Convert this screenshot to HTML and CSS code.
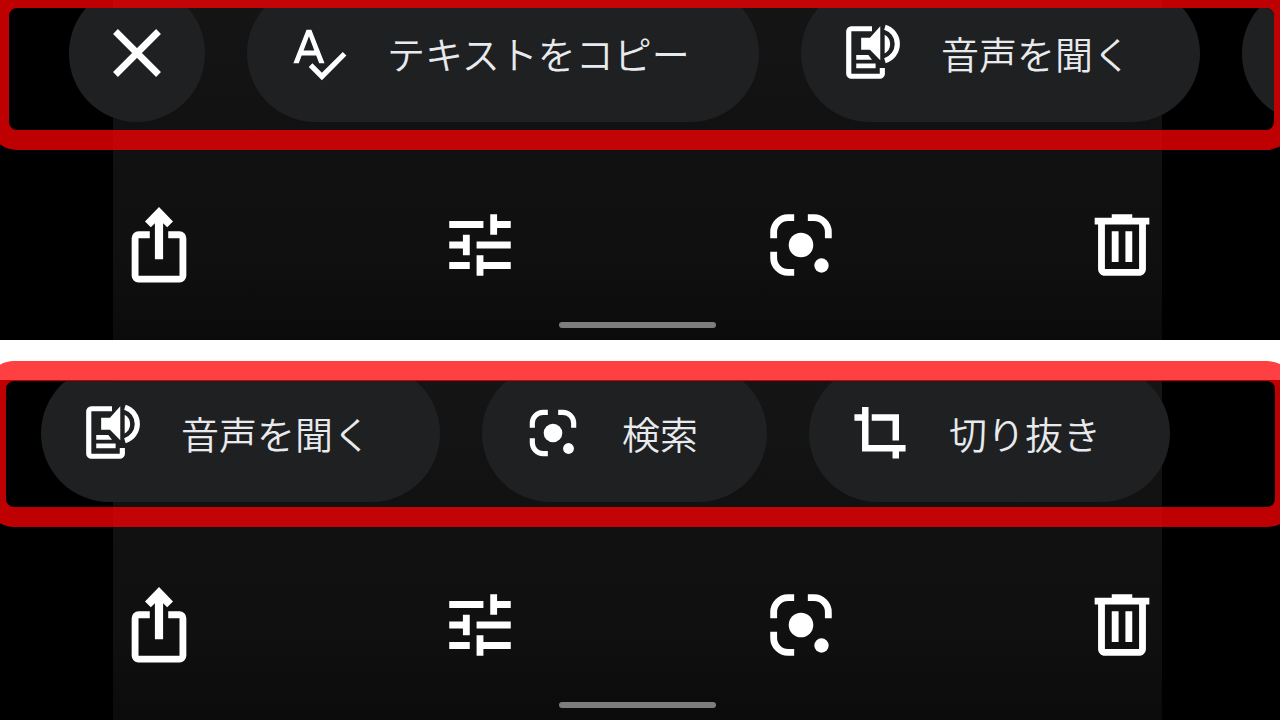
FILE: index.html
```html
<!DOCTYPE html>
<html lang="ja">
<head>
    <meta charset="UTF-8">
    <meta name="viewport" content="width=device-width, initial-scale=1">
    <title>テキストをコピー</title>
    <link rel="stylesheet" href="styles.css">
</head>
<body>
    <!-- Shared icons -->
    <svg class="icon-defs" aria-hidden="true">
        <symbol id="icon-close" viewBox="0 0 24 24">
            <path class="line" d="M5.700 5.700l12.600 12.600M18.300 5.700L5.700 18.300"/>
        </symbol>
        <symbol id="icon-copy-text" viewBox="0 0 24 24">
            <path d="M12.45 16h2.09L9.43 3H7.57L2.46 16h2.09l1.12-3h5.64l1.14 3zm-6.02-5L8.5 5.48 10.57 11H6.43zm15.16.59l-8.09 8.09L9.83 16l-1.41 1.41 5.09 5.09L23 13l-1.41-1.41z"/>
        </symbol>
        <symbol id="icon-listen" viewBox="0 0 24 24">
            <path class="line" d="M12 2.6H4a1 1 0 0 0-1 1V20a1 1 0 0 0 1 1h11a1 1 0 0 0 1-1v-2.2"/>
            <path class="line" d="M17 2a6.8 6.8 0 0 1 0 13"/>
            <path d="M7.8 6.1h3.4l4-4.5v13.2l-4-4.1H7.8z"/>
            <path d="M16.9 4.9a4.2 4.2 0 0 1 0 7.3z"/>
            <path d="M5.9 12.8h4.7l1.4 1.8H5.9zM5.9 16.1h7.5v1.8H5.9z"/>
        </symbol>
        <symbol id="icon-lens" viewBox="0 0 24 24">
            <path class="line" d="M4 10V8.200a4.200 4.200 0 0 1 4.200-4.200H10M14 4h1.800A4.200 4.200 0 0 1 20 8.200V10M4 14v1.800A4.200 4.200 0 0 0 8.200 20H10"/>
            <circle cx="12" cy="12" r="3.600"/>
            <circle cx="18" cy="18" r="2.100"/>
        </symbol>
        <symbol id="icon-crop" viewBox="0 0 24 24">
            <path class="line line-wide" d="M2.100 6h4.200M6.300 1.900v16h15.600M8.800 6h9.300v8.900M18.100 17.900v4"/>
        </symbol>
        <symbol id="icon-share" viewBox="0 0 24 24">
            <path d="M12 .9l4.100 4.200-1.700 1.700-1.200-1.200V16.200h-2.400V5.600L9.600 6.800 7.900 5.100z"/>
            <path class="line" d="M9.300 9H6a1 1 0 0 0-1 1v11a1 1 0 0 0 1 1h12a1 1 0 0 0 1-1V10a1 1 0 0 0-1-1h-3.300"/>
        </symbol>
        <symbol id="icon-tune" viewBox="0 0 24 24">
            <path d="M3 17v2h6v-2H3zM3 5v2h10V5H3zm10 16v-2h8v-2h-8v-2h-2v6h2zM7 9v2H3v2h4v2h2V9H7zm14 4v-2H11v2h10zm-6-4h2V7h4V5h-4V3h-2v6z"/>
        </symbol>
        <symbol id="icon-trash" viewBox="0 0 24 24">
            <path d="M4 4h5V3h6v1h5v2h-1v13c0 1.100-.9 2-2 2H7c-1.100 0-2-.9-2-2V6H4zm3 2v13h10V6zm2 2h2v9H9zm4 0h2v9h-2z"/>
        </symbol>
    </svg>

    <!-- First row of suggestions -->
    <section class="screen">
        <div class="chip-frame chip-frame-start">
            <button class="chip chip-round" type="button" aria-label="閉じる"><svg class="icon-large"><use href="#icon-close"/></svg></button>
            <button class="chip" type="button"><svg class="icon"><use href="#icon-copy-text"/></svg>テキストをコピー</button>
            <button class="chip" type="button"><svg class="icon"><use href="#icon-listen"/></svg>音声を聞く</button>
            <button class="chip chip-round" type="button" aria-label="検索"></button>
        </div>
        <nav class="toolbar">
            <button class="tool" type="button" aria-label="共有"><svg class="icon-large"><use href="#icon-share"/></svg></button>
            <button class="tool" type="button" aria-label="編集"><svg class="icon-large"><use href="#icon-tune"/></svg></button>
            <button class="tool" type="button" aria-label="レンズ"><svg class="icon-large"><use href="#icon-lens"/></svg></button>
            <button class="tool" type="button" aria-label="削除"><svg class="icon-large"><use href="#icon-trash"/></svg></button>
        </nav>
        <div class="home-area"><div class="home-bar"></div></div>
    </section>

    <!-- Row scrolled to the end -->
    <section class="screen">
        <div class="chip-frame chip-frame-end">
            <button class="chip" type="button"><svg class="icon"><use href="#icon-listen"/></svg>音声を聞く</button>
            <button class="chip" type="button"><svg class="icon"><use href="#icon-lens"/></svg>検索</button>
            <button class="chip" type="button"><svg class="icon"><use href="#icon-crop"/></svg>切り抜き</button>
        </div>
        <nav class="toolbar">
            <button class="tool" type="button" aria-label="共有"><svg class="icon-large"><use href="#icon-share"/></svg></button>
            <button class="tool" type="button" aria-label="編集"><svg class="icon-large"><use href="#icon-tune"/></svg></button>
            <button class="tool" type="button" aria-label="レンズ"><svg class="icon-large"><use href="#icon-lens"/></svg></button>
            <button class="tool" type="button" aria-label="削除"><svg class="icon-large"><use href="#icon-trash"/></svg></button>
        </nav>
        <div class="home-area"><div class="home-bar"></div></div>
    </section>
</body>
</html>
```

FILE: styles.css
```css
* {
    box-sizing: border-box;
}

body {
    font-family: "Noto Sans CJK JP", sans-serif;
    background-color: #fff;
    color: #e8eaed;
    margin: 0;
    display: flex;
    flex-direction: column;
    gap: 40px;
    overflow: hidden;
}

.icon-defs {
    display: none;
}

button {
    font: inherit;
    color: inherit;
    border: none;
    padding: 0;
    cursor: pointer;
}

/* Black side bands with the photo column between them */
.screen {
    display: flex;
    flex-direction: column;
    min-height: 340px;
    background:
        linear-gradient(to right, #000 8.8%, transparent 8.8%, transparent 90.8%, #000 90.8%),
        linear-gradient(#141514, #111 40%, #101010 75%, #0b0b0b);
}

/* Highlight around the suggestion chips */
.chip-frame {
    display: flex;
    align-items: flex-end;
    gap: 42px;
    border: 20px solid rgba(255, 0, 4, 0.75);
    border-radius: 28px;
    overflow: hidden;
}

.chip-frame-start {
    height: 162px;
    margin: -12px -14px 0 -11px;
    padding: 0 0 8px 60px;
}

.chip-frame-end {
    height: 166px;
    margin: -19px -15px 0 -14px;
    padding: 0 0 5px 35px;
}

.chip {
    display: flex;
    align-items: center;
    flex-shrink: 0;
    gap: 38px;
    height: 137px;
    padding: 0 69px 2px 40px;
    border-radius: 69px;
    background-color: #1f2022;
    font-size: 38px;
    font-weight: 350;
    line-height: 56px;
    white-space: nowrap;
}

.chip-round {
    justify-content: center;
    width: 136px;
    padding: 0 0 2px;
}

.icon,
.icon-large {
    display: block;
    width: 62px;
    height: 62px;
    fill: #fff;
}

.icon-large {
    width: 82px;
    height: 82px;
}

.line {
    fill: none;
    stroke: #fff;
    stroke-width: 2;
}

.line-wide {
    stroke-width: 2.5;
}

.toolbar {
    display: grid;
    grid-template-columns: repeat(4, 1fr);
    justify-items: center;
    margin: auto -2px 0;
}

.tool {
    background: none;
}

.home-area {
    padding: 36px 9.2% 12px 8.8%;
}

.home-bar {
    width: 157px;
    height: 6px;
    margin: 0 auto;
    border-radius: 3px;
    background-color: #7d7d7d;
}
```
